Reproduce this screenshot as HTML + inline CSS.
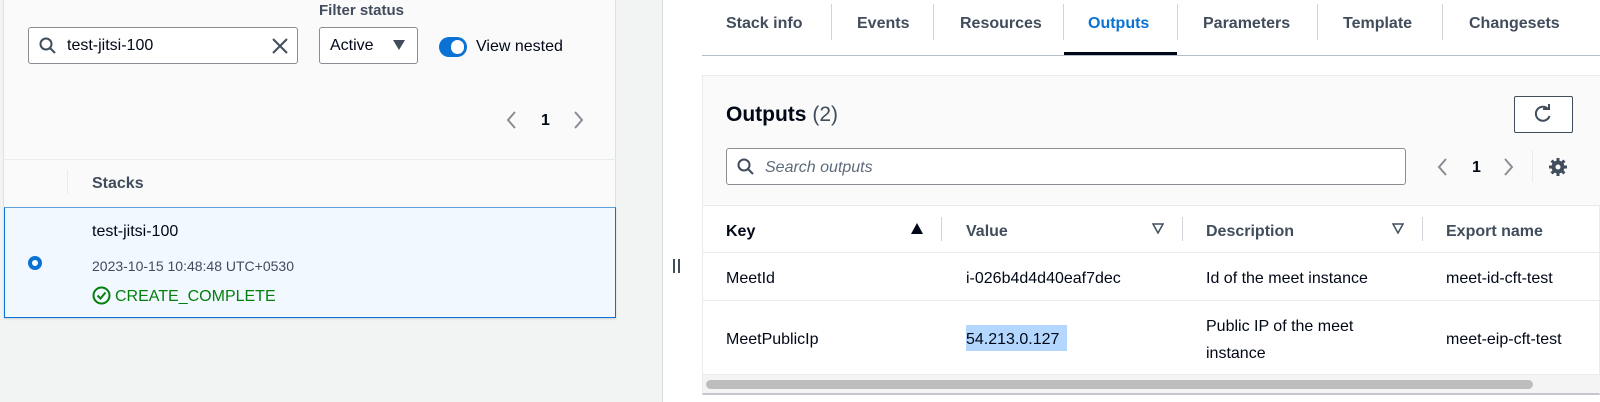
<!DOCTYPE html>
<html><head><style>
*{box-sizing:border-box;margin:0;padding:0}
body{width:1600px;height:402px;overflow:hidden;background:#f2f3f3;font-family:"Liberation Sans",sans-serif;color:#000716;position:relative;font-size:15px}
.a{position:absolute;white-space:nowrap}
.t{transform:translateY(2px)}
.b{font-weight:bold}
.g{color:#414d5c}
.sep{position:absolute;width:1px;background:#d1d5db}
</style></head><body>
<!-- left panel -->
<div class="a" style="left:3px;top:0;width:613px;height:207px;background:#fafafa;border-left:1px solid #e0e0e0;border-right:1px solid #e0e0e0"></div>
<div class="a" style="left:3px;top:159px;width:613px;height:1px;background:#e9ebed"></div>
<div class="a b g t" style="left:319px;top:0;font-size:15px">Filter status</div>
<div class="a" style="left:28px;top:27px;width:270px;height:37px;border:1px solid #8c8c94;border-radius:3px;background:#fff"></div>
<svg class="a" style="left:38px;top:36px" width="20" height="20" viewBox="0 0 20 20"><circle cx="8" cy="8" r="5.5" fill="none" stroke="#414d5c" stroke-width="2"/><path d="M12 12l5 5" stroke="#414d5c" stroke-width="2"/></svg>
<div class="a t" style="left:67px;top:35px;font-size:16px">test-jitsi-100</div>
<svg class="a" style="left:271px;top:37px" width="18" height="18" viewBox="0 0 18 18"><path d="M2 2l14 14M16 2L2 16" stroke="#414d5c" stroke-width="2"/></svg>
<div class="a" style="left:319px;top:27px;width:99px;height:37px;border:1px solid #8c8c94;border-radius:3px;background:#fff"></div>
<div class="a t" style="left:330px;top:35px;font-size:16px">Active</div>
<svg class="a" style="left:393px;top:40px" width="12" height="10"><path d="M0 0h12L6 10z" fill="#414d5c"/></svg>
<div class="a" style="left:439px;top:37px;width:28px;height:20px;border-radius:10px;background:#0972d3"></div>
<div class="a" style="left:451px;top:40px;width:13px;height:14px;border-radius:7px;background:#fff"></div>
<div class="a t" style="left:476px;top:36px;font-size:16px">View nested</div>
<svg class="a" style="left:505px;top:110px" width="12" height="20"><path d="M10 2L3 10l7 8" fill="none" stroke="#8c8c94" stroke-width="2"/></svg>
<div class="a b t" style="left:541px;top:110px;font-size:16px">1</div>
<svg class="a" style="left:573px;top:110px" width="12" height="20"><path d="M2 2l7 8-7 8" fill="none" stroke="#8c8c94" stroke-width="2"/></svg>
<div class="sep" style="left:67px;top:170px;height:24px;background:#e9ebed"></div>
<div class="a b g t" style="left:92px;top:173px;font-size:16px">Stacks</div>
<div class="a" style="left:4px;top:207px;width:612px;height:111px;background:#f1f8ff;border:1px solid #0972d3;border-top-color:#5fa2dd;box-shadow:0 1px 2px rgba(0,0,0,.15)"></div>
<div class="a" style="left:28px;top:256px;width:14px;height:14px;border-radius:7px;border:4px solid #0972d3;background:#fff"></div>
<div class="a t" style="left:92px;top:221px;font-size:16px">test-jitsi-100</div>
<div class="a g t" style="left:92px;top:256px;font-size:14px">2023-10-15 10:48:48 UTC+0530</div>
<svg class="a" style="left:92px;top:286px" width="19" height="19" viewBox="0 0 19 19"><circle cx="9.5" cy="9.5" r="8" fill="none" stroke="#037f0c" stroke-width="2"/><path d="M5.5 9.5l3 3 5-6" fill="none" stroke="#037f0c" stroke-width="2"/></svg>
<div class="a t" style="left:115px;top:286px;font-size:16px;color:#037f0c">CREATE_COMPLETE</div>
<!-- right -->
<div class="a" style="left:662px;top:0;width:1px;height:402px;background:#d5dbdb"></div>
<div class="a" style="left:663px;top:0;width:937px;height:402px;background:#fff"></div>
<div class="a" style="left:673px;top:259px;width:2px;height:14px;background:#414d5c"></div>
<div class="a" style="left:678px;top:259px;width:2px;height:14px;background:#414d5c"></div>
<div class="a b g t" style="left:726px;top:13px;font-size:16px">Stack info</div>
<div class="a b g t" style="left:857px;top:13px;font-size:16px">Events</div>
<div class="a b g t" style="left:960px;top:13px;font-size:16px">Resources</div>
<div class="a b t" style="left:1088px;top:13px;font-size:16px;color:#0972d3">Outputs</div>
<div class="a b g t" style="left:1203px;top:13px;font-size:16px">Parameters</div>
<div class="a b g t" style="left:1343px;top:13px;font-size:16px">Template</div>
<div class="a b g t" style="left:1469px;top:13px;font-size:16px">Changesets</div>
<div class="sep" style="left:831px;top:4px;height:36px"></div>
<div class="sep" style="left:933px;top:4px;height:36px"></div>
<div class="sep" style="left:1063px;top:4px;height:36px"></div>
<div class="sep" style="left:1177px;top:4px;height:36px"></div>
<div class="sep" style="left:1317px;top:4px;height:36px"></div>
<div class="sep" style="left:1442px;top:4px;height:36px"></div>
<div class="a" style="left:702px;top:55px;width:898px;height:1px;background:#b6bec9"></div>
<div class="a" style="left:1064px;top:52px;width:113px;height:3px;background:#000716"></div>
<!-- card -->
<div class="a" style="left:702px;top:75px;width:898px;height:320px;background:#fff;border:1px solid #e9ebed;border-bottom:2px solid #c6c6cd"></div>
<div class="a" style="left:703px;top:76px;width:897px;height:130px;background:#fafafa"></div>
<div class="a t" style="left:726px;top:101px;font-size:21px"><b>Outputs</b> <span class="g">(2)</span></div>
<div class="a" style="left:1514px;top:96px;width:59px;height:37px;border:1px solid #414d5c;border-radius:2px;background:#fff"></div>
<svg class="a" style="left:1533px;top:104px" width="20" height="20" viewBox="0 0 20 20"><path d="M15 5A7 7 0 1 0 16.5 12" fill="none" stroke="#414d5c" stroke-width="2"/><path d="M10 5h6V0" fill="none" stroke="#414d5c" stroke-width="2"/></svg>
<div class="a" style="left:726px;top:148px;width:680px;height:37px;border:1px solid #8c8c94;border-radius:3px;background:#fff"></div>
<svg class="a" style="left:736px;top:157px" width="20" height="20" viewBox="0 0 20 20"><circle cx="8" cy="8" r="5.5" fill="none" stroke="#414d5c" stroke-width="2"/><path d="M12 12l5 5" stroke="#414d5c" stroke-width="2"/></svg>
<div class="a t" style="left:765px;top:157px;font-size:16px;font-style:italic;color:#5f6b7a">Search outputs</div>
<svg class="a" style="left:1436px;top:157px" width="12" height="20"><path d="M10 2L3 10l7 8" fill="none" stroke="#8c8c94" stroke-width="2"/></svg>
<div class="a b t" style="left:1472px;top:157px;font-size:16px">1</div>
<svg class="a" style="left:1503px;top:157px" width="12" height="20"><path d="M2 2l7 8-7 8" fill="none" stroke="#8c8c94" stroke-width="2"/></svg>
<div class="sep" style="left:1532px;top:150px;height:32px;background:#e9ebed"></div>
<svg class="a" style="left:1547px;top:156px" width="22" height="22" viewBox="0 0 22 22"><g stroke="#414d5c" stroke-width="3"><path d="M11 2v18M2 11h18M4.6 4.6l12.8 12.8M17.4 4.6L4.6 17.4"/></g><circle cx="11" cy="11" r="6.5" fill="#414d5c"/><circle cx="11" cy="11" r="2.5" fill="#fafafa"/></svg>
<div class="a" style="left:703px;top:205px;width:897px;height:1px;background:#e9ebed"></div>
<div class="a b t" style="left:726px;top:221px;font-size:16px">Key</div>
<svg class="a" style="left:911px;top:223px" width="12" height="11"><path d="M6 0l6 11H0z" fill="#000716"/></svg>
<div class="sep" style="left:941px;top:217px;height:24px"></div>
<div class="a b g t" style="left:966px;top:221px;font-size:16px">Value</div>
<svg class="a" style="left:1152px;top:223px" width="12" height="11"><path d="M1 1h10L6 10z" fill="none" stroke="#414d5c" stroke-width="1.5"/></svg>
<div class="sep" style="left:1182px;top:217px;height:24px"></div>
<div class="a b g t" style="left:1206px;top:221px;font-size:16px">Description</div>
<svg class="a" style="left:1392px;top:223px" width="12" height="11"><path d="M1 1h10L6 10z" fill="none" stroke="#414d5c" stroke-width="1.5"/></svg>
<div class="sep" style="left:1422px;top:217px;height:24px"></div>
<div class="a b g t" style="left:1446px;top:221px;font-size:16px">Export name</div>
<div class="a" style="left:703px;top:252px;width:897px;height:1px;background:#e9ebed"></div>
<div class="a t" style="left:726px;top:268px;font-size:16px">MeetId</div>
<div class="a t" style="left:966px;top:268px;font-size:16px">i-026b4d4d40eaf7dec</div>
<div class="a t" style="left:1206px;top:268px;font-size:16px">Id of the meet instance</div>
<div class="a t" style="left:1446px;top:268px;font-size:16px">meet-id-cft-test</div>
<div class="a" style="left:703px;top:300px;width:897px;height:1px;background:#e9ebed"></div>
<div class="a t" style="left:726px;top:329px;font-size:16px">MeetPublicIp</div>
<div class="a" style="left:966px;top:325px;width:101px;height:26px;background:#b3d7ff"></div>
<div class="a t" style="left:966px;top:329px;font-size:16px">54.213.0.127</div>
<div class="a t" style="left:1206px;top:316px;font-size:16px">Public IP of the meet</div>
<div class="a t" style="left:1206px;top:343px;font-size:16px">instance</div>
<div class="a t" style="left:1446px;top:329px;font-size:16px">meet-eip-cft-test</div>
<div class="a" style="left:703px;top:374px;width:897px;height:1px;background:#e9ebed"></div>
<div class="a" style="left:703px;top:375px;width:897px;height:18px;background:#f4f4f4"></div>
<div class="a" style="left:706px;top:380px;width:827px;height:9px;border-radius:5px;background:#bdbdbd"></div>
</body></html>
